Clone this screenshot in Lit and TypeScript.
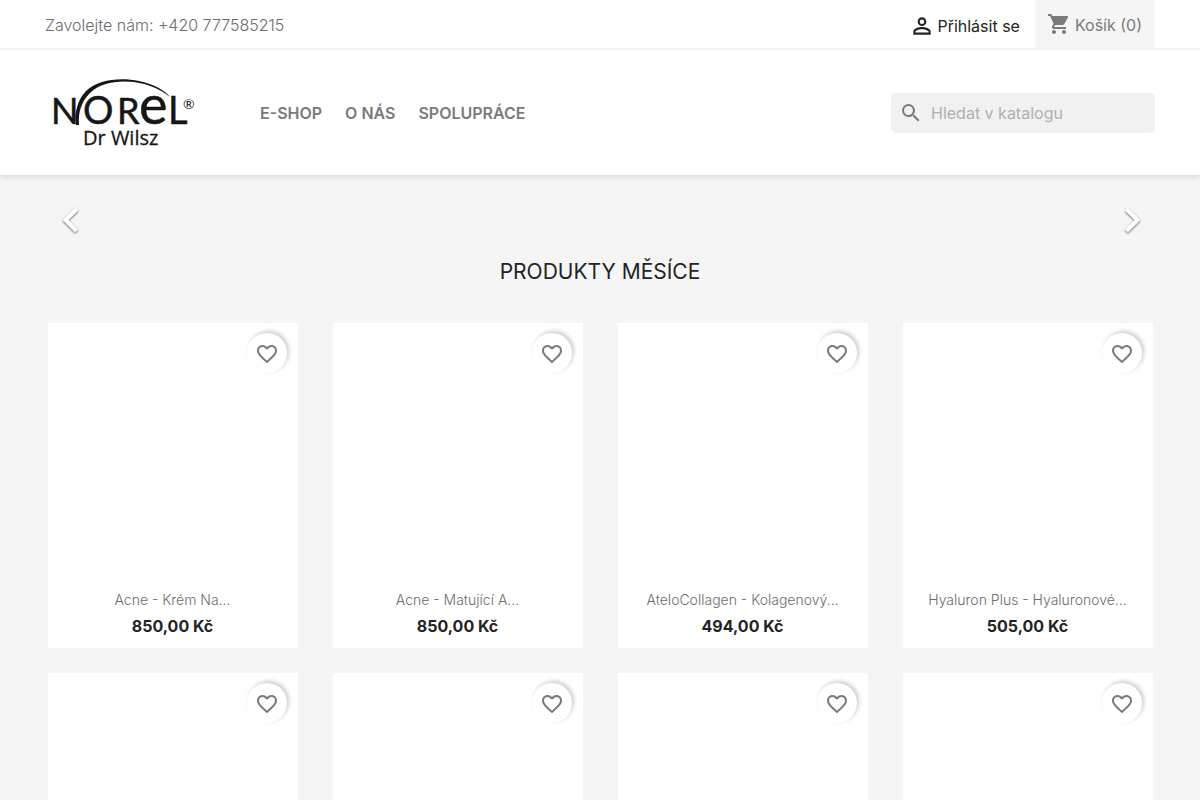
import { LitElement, html, css, svg } from "lit";
import { customElement, property } from "lit/decorators.js";

interface Product {
  name?: string;
  price?: string;
}

const PRODUCTS: Product[] = [
  { name: "Acne - Krém Na...", price: "850,00 Kč" },
  { name: "Acne - Matující A...", price: "850,00 Kč" },
  { name: "AteloCollagen - Kolagenový...", price: "494,00 Kč" },
  { name: "Hyaluron Plus - Hyaluronové...", price: "505,00 Kč" },
  {},
  {},
  {},
  {},
];

const ICONS = {
  person: svg`<path d="M12 5.9a2.1 2.1 0 1 1 0 4.2 2.1 2.1 0 0 1 0-4.2m0 9c2.97 0 6.1 1.46 6.1 2.1v1.1H5.9V17c0-.64 3.13-2.1 6.1-2.1M12 4C9.79 4 8 5.79 8 8s1.79 4 4 4 4-1.79 4-4-1.79-4-4-4zm0 9c-2.67 0-8 1.34-8 4v3h16v-3c0-2.66-5.33-4-8-4z"/>`,
  cart: svg`<path d="M7 18c-1.1 0-1.99.9-1.99 2S5.9 22 7 22s2-.9 2-2-.9-2-2-2zM1 2v2h2l3.6 7.59-1.35 2.45c-.16.28-.25.61-.25.96 0 1.1.9 2 2 2h12v-2H7.42c-.14 0-.25-.11-.25-.25l.03-.12.9-1.63h7.45c.75 0 1.41-.41 1.75-1.03l3.58-6.49A1.003 1.003 0 0 0 20 4H5.21l-.94-2H1zm16 16c-1.1 0-1.99.9-1.99 2s.89 2 1.99 2 2-.9 2-2-.9-2-2-2z"/>`,
  search: svg`<path d="M15.5 14h-.79l-.28-.27A6.471 6.471 0 0 0 16 9.5 6.5 6.5 0 1 0 9.5 16c1.61 0 3.09-.59 4.23-1.57l.27.28v.79l5 4.99L20.49 19l-4.99-5zm-6 0C7.01 14 5 11.99 5 9.5S7.01 5 9.5 5 14 7.01 14 9.5 11.99 14 9.5 14z"/>`,
  left: svg`<path d="M15.41 7.41L14 6l-6 6 6 6 1.41-1.41L10.83 12z"/>`,
  right: svg`<path d="M10 6L8.59 7.41 13.17 12l-4.58 4.59L10 18l6-6z"/>`,
  heart: svg`<path d="M16.5 3c-1.74 0-3.41.81-4.5 2.09C10.91 3.81 9.24 3 7.5 3 4.42 3 2 5.42 2 8.5c0 3.78 3.4 6.86 8.55 11.54L12 21.35l1.45-1.32C18.6 15.36 22 12.28 22 8.5 22 5.42 19.58 3 16.5 3zm-4.4 15.55l-.1.1-.1-.1C7.14 14.24 4 11.39 4 8.5 4 6.5 5.5 5 7.5 5c1.54 0 3.04.99 3.57 2.36h1.87C13.46 5.99 14.96 5 16.5 5c2 0 3.5 1.5 3.5 3.5 0 2.89-3.14 5.74-7.9 10.05z"/>`,
};

const icon = (name: keyof typeof ICONS) =>
  html`<svg class="icon" viewBox="0 0 24 24" aria-hidden="true">${ICONS[name]}</svg>`;

@customElement("product-card")
export class ProductCard extends LitElement {
  @property({ attribute: false }) product: Product = {};

  static styles = css`
    :host {
      display: block;
      position: relative;
      background: #fff;
      text-align: center;
    }
    .picture {
      display: block;
      height: 250px;
    }
    .info {
      min-height: 75px;
      box-sizing: border-box;
      padding-top: 16px;
    }
    .name {
      margin: 0;
      font-size: 14px;
      line-height: 22px;
      font-weight: 300;
    }
    .name a {
      color: #6c6c6c;
      text-decoration: none;
    }
    .price {
      margin: 4px 0 0;
      font-size: 16px;
      line-height: 22px;
      font-weight: 700;
      color: #232323;
    }
    .wish {
      position: absolute;
      top: 10px;
      right: 11px;
      display: flex;
      align-items: center;
      justify-content: center;
      box-sizing: border-box;
      width: 40px;
      height: 40px;
      padding: 2px 0 0;
      border: 0;
      border-radius: 50%;
      background: #fff;
      color: #7a7a7a;
      box-shadow: 2px -2px 4px 0 rgba(0, 0, 0, 0.2);
      cursor: pointer;
    }
    .icon {
      width: 24px;
      height: 24px;
      fill: currentColor;
    }
  `;

  render() {
    const { name, price } = this.product;
    return html`
      <a class="picture" href="#" aria-label=${name ?? "Produkt"}></a>
      <div class="info">
        ${name
          ? html`<h3 class="name"><a href="#">${name}</a></h3>
              <p class="price">${price}</p>`
          : null}
      </div>
      <button class="wish" type="button" aria-label="Přidat do oblíbených">${icon("heart")}</button>
    `;
  }
}

@customElement("app-root")
export class AppRoot extends LitElement {
  static styles = css`
    :host {
      display: block;
      min-height: 100vh;
      background: #f5f5f5;
      color: #7a7a7a;
      font-family: Inter, "Noto Sans", sans-serif;
      font-size: 16px;
      line-height: 24px;
    }
    a {
      color: inherit;
      text-decoration: none;
    }
    .container {
      box-sizing: border-box;
      max-width: 1140px;
      margin: 0 auto;
      padding: 0 15px;
    }
    .icon {
      flex: none;
      width: 24px;
      height: 24px;
      fill: currentColor;
    }
    .header {
      background: #fff;
      box-shadow: 0 2px 5px 0 rgba(0, 0, 0, 0.11);
    }
    .topbar {
      border-bottom: 2px solid #f5f5f5;
    }
    .topbar .container {
      display: flex;
      align-items: center;
      justify-content: space-between;
    }
    .phone {
      padding-top: 2px;
      font-weight: 300;
      color: #6c6c6c;
    }
    .account {
      display: flex;
    }
    .login {
      display: flex;
      align-items: center;
      gap: 2px;
      padding: 3px 15px 0 0;
      color: #232323;
    }
    .login .icon {
      width: 26px;
      height: 26px;
    }
    .cart {
      display: flex;
      align-items: center;
      gap: 4px;
      height: 48px;
      box-sizing: border-box;
      padding: 0 13px 0 12px;
      background: #f5f5f5;
    }
    .cart span {
      padding-top: 2px;
    }
    .main {
      display: flex;
      align-items: center;
      min-height: 125px;
    }
    .logo {
      display: block;
      width: 160px;
      height: 80px;
      margin-right: 55px;
      fill: #161616;
    }
    .letters {
      font-family: Lato, sans-serif;
      font-size: 36px;
      stroke: #161616;
      stroke-width: 0.5px;
    }
    .letters .wide {
      font-size: 38px;
    }
    .letters .large {
      font-size: 54px;
    }
    .letters .mark {
      font-size: 14px;
      stroke: none;
    }
    .subtitle {
      font-family: "Open Sans", sans-serif;
      font-size: 20px;
      stroke: #161616;
      stroke-width: 0.3px;
    }
    .menu {
      display: flex;
      flex: 1;
      gap: 23px;
      font-weight: 600;
    }
    .search {
      display: flex;
      align-items: center;
      box-sizing: border-box;
      width: 264px;
      height: 40px;
      gap: 8px;
      padding: 0 8px;
      border-radius: 5px;
      background: #f1f1f1;
    }
    .search input {
      flex: 1;
      min-width: 0;
      padding: 0;
      border: 0;
      outline: 0;
      background: none;
      color: #232323;
      font: inherit;
    }
    .search input::placeholder {
      color: #b0b0b0;
      opacity: 1;
    }
    .carousel {
      display: flex;
      justify-content: space-between;
      margin: 0 -2px 0 1px;
      padding-top: 20px;
    }
    .arrow {
      display: block;
      padding: 0;
      border: 0;
      background: none;
      color: #fff;
      cursor: pointer;
    }
    .arrow .icon {
      display: block;
      width: 50px;
      height: 50px;
      filter: drop-shadow(0 1px 1px rgba(0, 0, 0, 0.6));
    }
    .title {
      margin: 13px 0 37px;
      font-size: 21px;
      line-height: 28px;
      font-weight: 400;
      text-align: center;
      color: #232323;
    }
    .products {
      display: grid;
      grid-template-columns: repeat(auto-fill, 250px);
      justify-content: center;
      gap: 25px 35px;
    }
  `;

  render() {
    return html`
      <header class="header">
        <nav class="topbar">
          <div class="container">
            <span class="phone">Zavolejte nám: +420 777585215</span>
            <div class="account">
              <a class="login" href="#">${icon("person")}<span>Přihlásit se</span></a>
              <a class="cart" href="#">${icon("cart")}<span>Košík (0)</span></a>
            </div>
          </div>
        </nav>
        <div class="container main">
          <a href="#" aria-label="Norel Dr Wilsz">
            <svg class="logo" viewBox="0 0 160 80">
              <path
                d="M31 52 C29 42 32 27 41 18 C53 6 76 4 94 8 C108 11 120 17 125 24 C115 16 103 11 89 9 C72 7 55 10 45 20 C36 29 33 40 34 52z"
              />
              <text class="letters" y="51">
                <tspan x="6">N</tspan><tspan class="wide" x="38">O</tspan><tspan x="72">R</tspan><tspan class="large" x="94">e</tspan><tspan class="wide" x="123">L</tspan><tspan class="mark" x="138" y="36">®</tspan>
              </text>
              <text class="subtitle" x="38" y="72">Dr Wilsz</text>
            </svg>
          </a>
          <nav class="menu">
            <a href="#">E-SHOP</a>
            <a href="#">O NÁS</a>
            <a href="#">SPOLUPRÁCE</a>
          </nav>
          <label class="search">
            ${icon("search")}
            <input type="text" placeholder="Hledat v katalogu" aria-label="Hledat v katalogu" />
          </label>
        </div>
      </header>
      <main class="container">
        <div class="carousel">
          <button class="arrow" type="button" aria-label="Předchozí">${icon("left")}</button>
          <button class="arrow" type="button" aria-label="Další">${icon("right")}</button>
        </div>
        <h2 class="title">PRODUKTY MĚSÍCE</h2>
        <section class="products">
          ${PRODUCTS.map((p) => html`<product-card .product=${p}></product-card>`)}
        </section>
      </main>
    `;
  }
}
